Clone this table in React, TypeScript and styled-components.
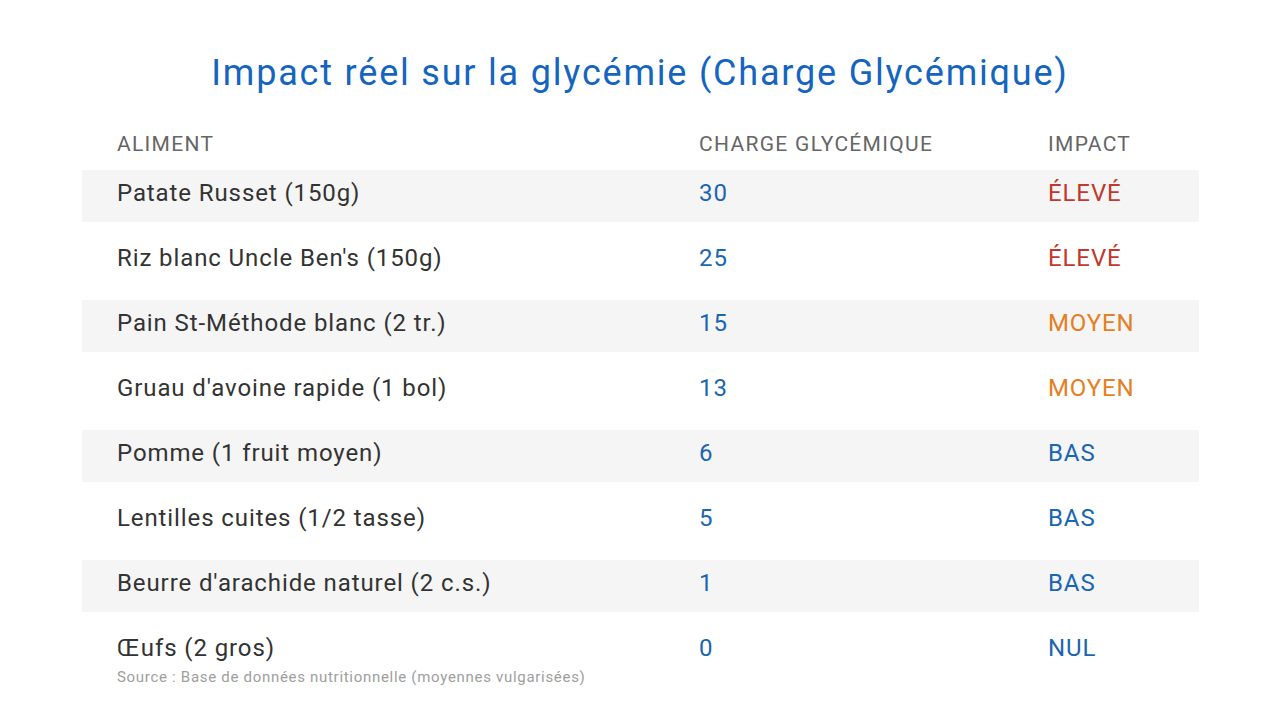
import React from "react";
import styled, { createGlobalStyle } from "styled-components";

const Global = createGlobalStyle`
  html, body { margin: 0; padding: 0; background: #ffffff; }
  body { font-family: Roboto, "Open Sans", "Liberation Sans", sans-serif; }
`;

const Page = styled.div`
  width: 1280px;
  height: 720px;
  box-sizing: border-box;
  padding-top: 53px;
  display: flex;
  flex-direction: column;
  background: #ffffff;
`;

const Title = styled.h1`
  margin: 0;
  text-align: center;
  font-size: 36px;
  line-height: 40px;
  font-weight: 400;
  color: #1565c0;
  letter-spacing: 1.8px;
`;

const Table = styled.div`
  margin: 36px 0 0 82px;
  width: 1117px;
  display: flex;
  flex-direction: column;
`;

const HeaderRow = styled.div`
  display: grid;
  grid-template-columns: 582px 349px 1fr;
  padding-left: 35px;
  height: 30px;
  align-items: center;
  margin-bottom: 11px;
`;

const HeadCell = styled.div`
  font-size: 21px;
  color: #666666;
  text-transform: uppercase;
  letter-spacing: 1.3px;
`;

const Body = styled.div`
  display: flex;
  flex-direction: column;
  gap: 13px;
`;

const Row = styled.div<{ $striped: boolean }>`
  display: grid;
  grid-template-columns: 582px 349px 1fr;
  padding-left: 35px;
  height: 52px;
  box-sizing: border-box;
  padding-bottom: 6px;
  align-items: center;
  background: ${(p) => (p.$striped ? "#f5f5f5" : "transparent")};
`;

const Cell = styled.div`
  font-size: 24px;
  letter-spacing: 0.9px;
`;

const FoodCell = styled(Cell)`
  color: #333333;
`;

const LoadCell = styled(Cell)`
  color: #1a66b0;
`;

const ImpactCell = styled(Cell)<{ $color: string }>`
  color: ${(p) => p.$color};
`;

const Source = styled.div`
  margin: -9px 0 0 117px;
  font-size: 15px;
  line-height: 18px;
  letter-spacing: 0.7px;
  color: #9e9e9e;
`;

const IMPACT_COLORS: Record<string, string> = {
  "ÉLEVÉ": "#c0392b",
  MOYEN: "#e67e22",
  BAS: "#1a66b0",
  NUL: "#1a66b0",
};

const rows = [
  { food: "Patate Russet (150g)", load: "30", impact: "ÉLEVÉ" },
  { food: "Riz blanc Uncle Ben's (150g)", load: "25", impact: "ÉLEVÉ" },
  { food: "Pain St-Méthode blanc (2 tr.)", load: "15", impact: "MOYEN" },
  { food: "Gruau d'avoine rapide (1 bol)", load: "13", impact: "MOYEN" },
  { food: "Pomme (1 fruit moyen)", load: "6", impact: "BAS" },
  { food: "Lentilles cuites (1/2 tasse)", load: "5", impact: "BAS" },
  { food: "Beurre d'arachide naturel (2 c.s.)", load: "1", impact: "BAS" },
  { food: "Œufs (2 gros)", load: "0", impact: "NUL" },
];

export default function App() {
  return (
    <>
      <Global />
      <Page>
        <Title>Impact réel sur la glycémie (Charge Glycémique)</Title>
        <Table>
          <HeaderRow>
            <HeadCell>Aliment</HeadCell>
            <HeadCell>Charge glycémique</HeadCell>
            <HeadCell>Impact</HeadCell>
          </HeaderRow>
          <Body>
            {rows.map((r, i) => (
              <Row key={r.food} $striped={i % 2 === 0}>
                <FoodCell>{r.food}</FoodCell>
                <LoadCell>{r.load}</LoadCell>
                <ImpactCell $color={IMPACT_COLORS[r.impact]}>{r.impact}</ImpactCell>
              </Row>
            ))}
          </Body>
        </Table>
        <Source>Source : Base de données nutritionnelle (moyennes vulgarisées)</Source>
      </Page>
    </>
  );
}
